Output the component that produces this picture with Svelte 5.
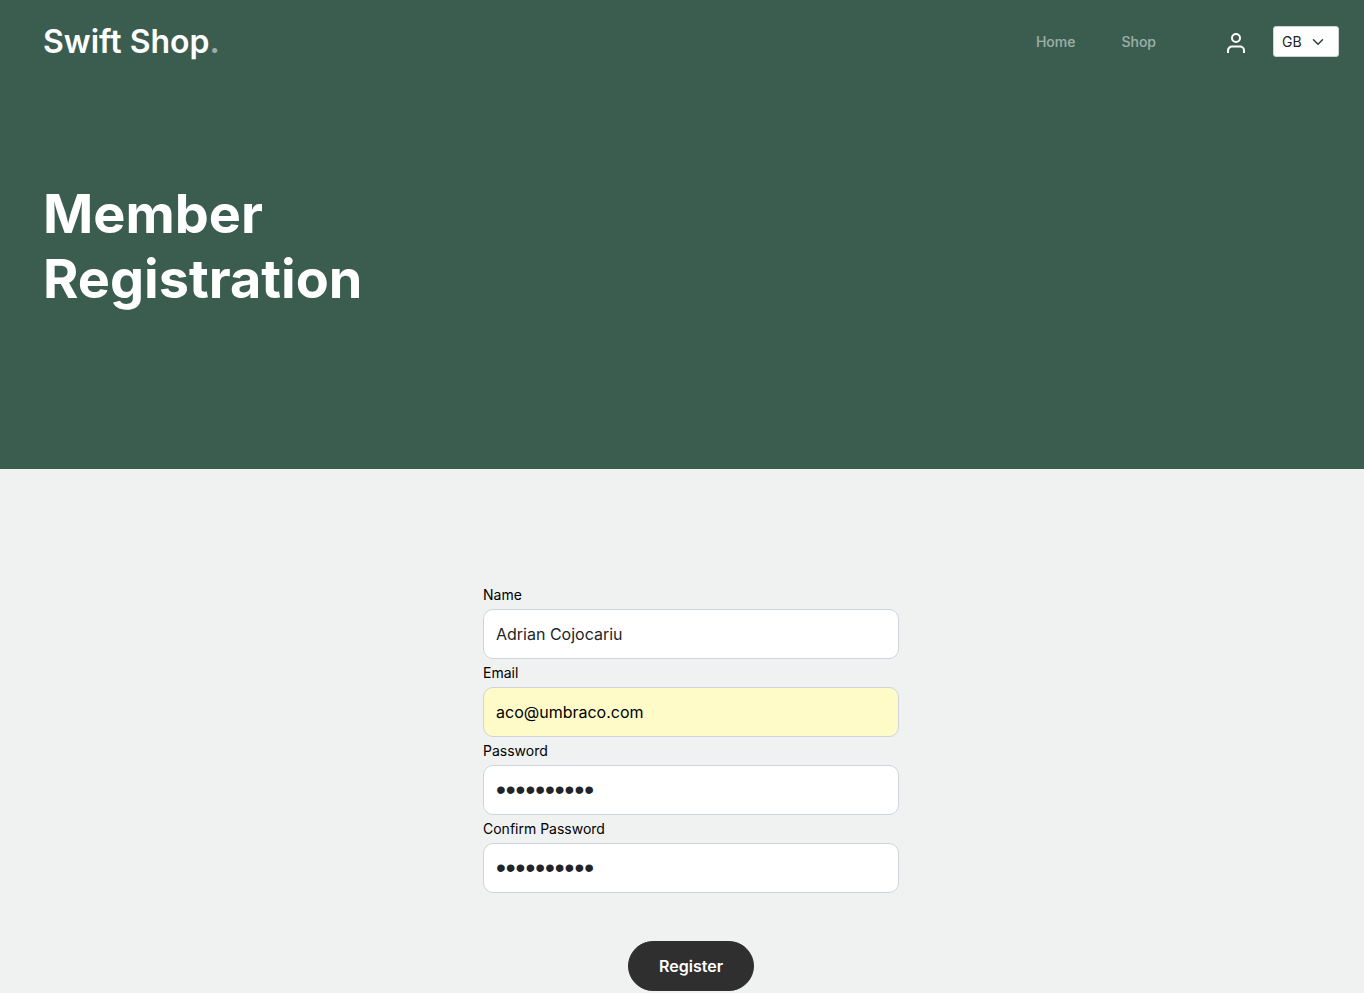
<script>
  let name = $state('Adrian Cojocariu');
  let email = $state('aco@umbraco.com');
  let password = $state('abcdefghij');
  let confirm = $state('abcdefghij');
</script>

<div class="page">
  <section class="hero">
    <header>
      <a class="brand" href="/">Swift Shop<span>.</span></a>
      <nav>
        <a href="/">Home</a>
        <a href="/shop">Shop</a>
      </nav>
      <a class="account" href="/account" aria-label="Account">
        <svg viewBox="0 0 24 24" width="24" height="24" fill="none" stroke="#fff" stroke-width="2">
          <path d="M4 22v-2.5a4 4 0 0 1 4-4h8a4 4 0 0 1 4 4V22" />
          <circle cx="12" cy="7" r="4" />
        </svg>
      </a>
      <div class="country">
        <select aria-label="Country"><option>GB</option></select>
        <svg viewBox="0 0 16 16" width="12" height="12" fill="none" stroke="#343a40" stroke-width="2" stroke-linecap="round" stroke-linejoin="round">
          <path d="m2 5 6 6 6-6" />
        </svg>
      </div>
    </header>
    <h1>Member Registration</h1>
  </section>

  <main>
    <form onsubmit={(e) => e.preventDefault()}>
      <label for="name">Name</label>
      <input id="name" type="text" bind:value={name} />
      <label for="email">Email</label>
      <input id="email" class="filled" type="email" bind:value={email} />
      <label for="password">Password</label>
      <input id="password" type="password" bind:value={password} />
      <label for="confirm">Confirm Password</label>
      <input id="confirm" type="password" bind:value={confirm} />
      <button type="submit">Register</button>
    </form>
  </main>
</div>

<style>
  :global(body) {
    margin: 0;
    background: #eff2f1;
  }
  .page {
    font-family: Inter, sans-serif;
    font-size: 14px;
    color: #000;
  }
  .page * {
    box-sizing: border-box;
  }
  .hero {
    background: #3b5d50;
    padding-bottom: 158px;
  }
  header {
    display: flex;
    align-items: center;
    height: 84px;
    padding: 0 25px 0 43px;
  }
  a {
    text-decoration: none;
    color: #fff;
  }
  .brand {
    font-size: 32px;
    font-weight: 600;
    line-height: 48px;
    margin-right: auto;
  }
  .brand span {
    opacity: 0.5;
  }
  nav {
    display: flex;
    gap: 46px;
    margin-right: 68px;
  }
  nav a {
    font-weight: 500;
    line-height: 24px;
    opacity: 0.5;
  }
  .account {
    display: flex;
    padding-top: 2px;
    margin-right: 25px;
  }
  .country {
    display: grid;
    align-items: center;
    width: 66px;
    padding-bottom: 1px;
  }
  .country select,
  .country svg {
    grid-area: 1 / 1;
  }
  .country svg {
    justify-self: end;
    margin-right: 15px;
    pointer-events: none;
  }
  select {
    appearance: none;
    width: 100%;
    height: 31px;
    padding: 0 8px;
    border: 1px solid #ced4da;
    border-radius: 3px;
    background: #fff;
    color: #212529;
    font: 400 14px/21px Inter, sans-serif;
  }
  h1 {
    max-width: 400px;
    margin: 0;
    padding: 97px 0 0 43px;
    color: #fff;
    font-size: 54px;
    font-weight: 700;
    line-height: 65px;
  }
  main {
    padding: 112px 16px 2px 34px;
  }
  form {
    display: flex;
    flex-direction: column;
    width: 100%;
    max-width: 416px;
    margin: 0 auto;
  }
  label {
    line-height: 28px;
  }
  input {
    width: 100%;
    height: 50px;
    padding: 0 12px;
    border: 1px solid #ced4da;
    border-radius: 10px;
    background: #fff;
    color: #212529;
    font: 400 16px/24px Inter, sans-serif;
  }
  input[type='password'] {
    font-family: "Liberation Sans", Arial, sans-serif;
    font-size: 28px;
  }
  .filled {
    background: #fffbc8;
    color: #000;
  }
  button {
    align-self: center;
    margin-top: 48px;
    padding: 12px 30px;
    border: 1px solid #2f2f2f;
    border-radius: 30px;
    background: #2f2f2f;
    color: #fff;
    font: 600 16px/24px Inter, sans-serif;
  }
</style>
